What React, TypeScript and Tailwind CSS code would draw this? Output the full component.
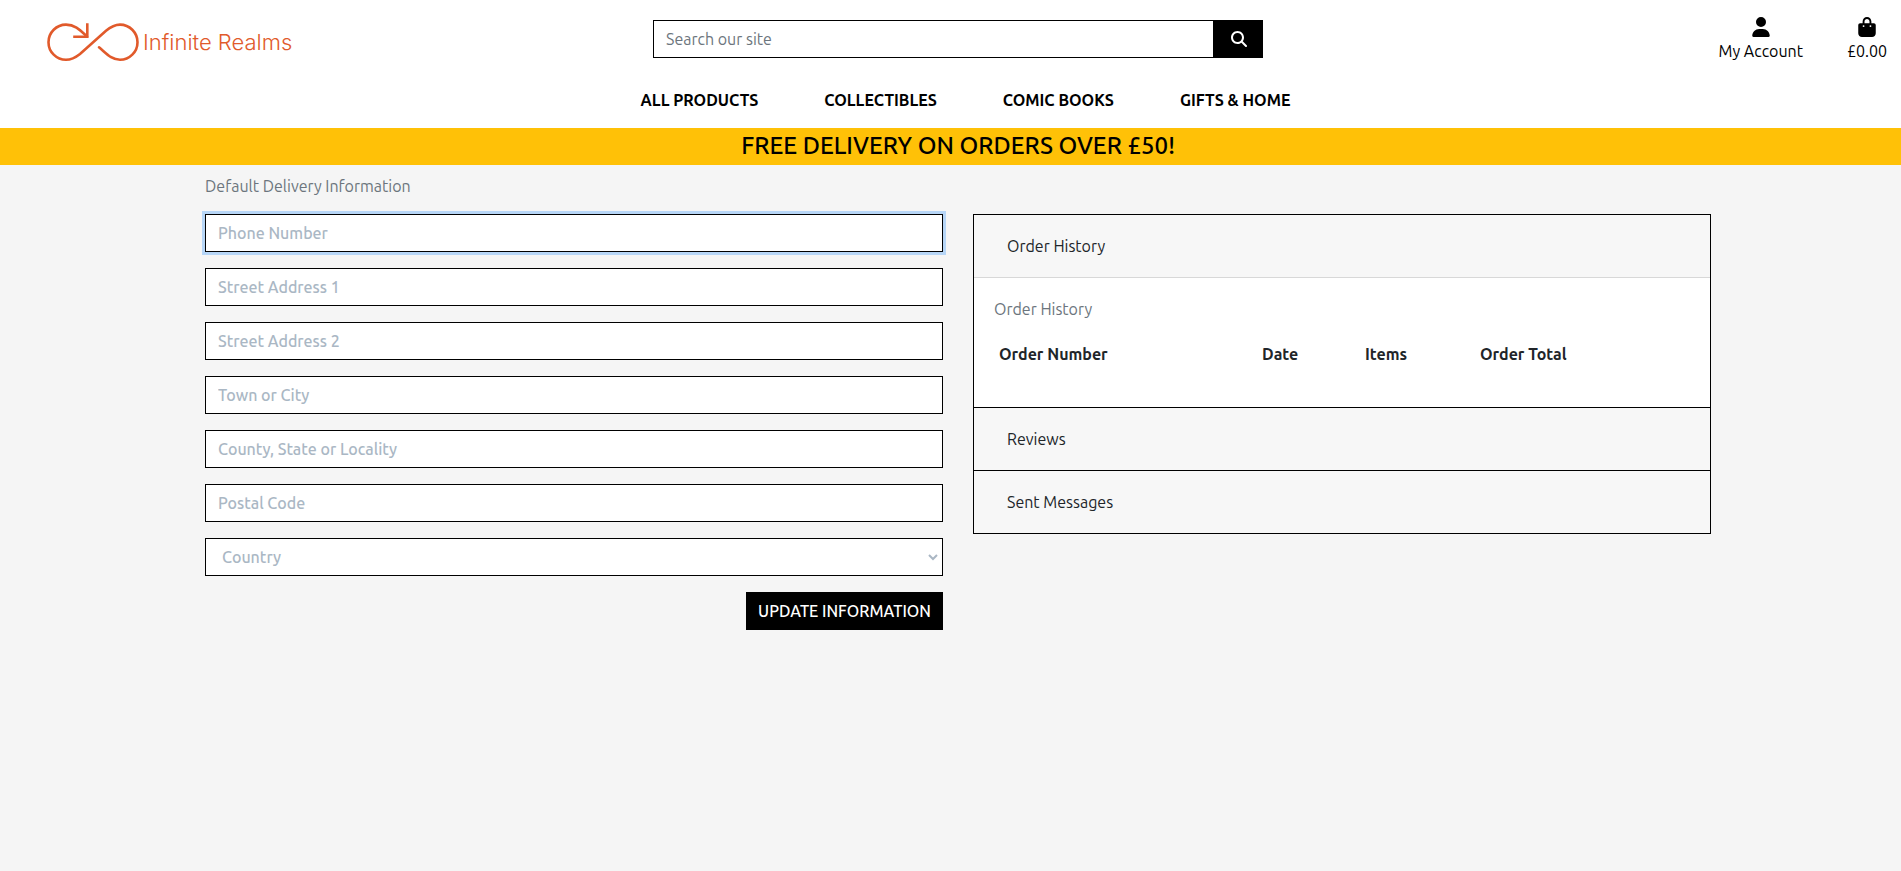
import { useState } from 'react';
import type { ReactNode } from 'react';
import { FaMagnifyingGlass, FaUser, FaBagShopping } from 'react-icons/fa6';

const navLinks = ['ALL PRODUCTS', 'COLLECTIBLES', 'COMIC BOOKS', 'GIFTS & HOME'];

const fields = [
  { id: 'phone', label: 'Phone Number' },
  { id: 'street1', label: 'Street Address 1' },
  { id: 'street2', label: 'Street Address 2' },
  { id: 'town', label: 'Town or City' },
  { id: 'county', label: 'County, State or Locality' },
  { id: 'postcode', label: 'Postal Code' },
];

function Logo() {
  return (
    <a href="#" className="flex items-center gap-1 text-[#e15a2b]">
      <svg width="92" height="40" viewBox="0 0 92 40" fill="none" stroke="currentColor" strokeWidth="2.6" strokeLinecap="round" aria-hidden="true">
        <path d="M40 13.500 C33 7 28 1.600 19 1.600 C9.500 1.600 1.500 9.500 1.500 19.200 C1.500 29 9.500 36.800 19 36.800 C25 36.800 28.500 34.600 33 31 L59 7.800 C63.500 4 67 1.600 73 1.600 C82.500 1.600 90.500 9.500 90.500 19.200 C90.500 29 82.500 36.800 73 36.800 C64.500 36.800 59.500 30.500 52 24.300" />
        <path d="M40.300 1.500 V13.800 H27.500" strokeLinecap="square" />
      </svg>
      <span className="pb-0.5 font-['Inter',sans-serif] text-[22px] leading-8 font-light">Infinite Realms</span>
    </a>
  );
}

function Header() {
  return (
    <header className="bg-white pl-[15px]">
      <div className="grid grid-cols-3 items-start gap-7 pt-[17px]">
        <div className="flex pt-1.5 pl-8">
          <Logo />
        </div>
        <form className="mt-[3px] flex items-center" onSubmit={(e) => e.preventDefault()}>
          <input
            type="search"
            aria-label="Search our site"
            placeholder="Search our site"
            className="h-[38px] min-w-0 flex-1 border border-black px-3 outline-none placeholder:text-[#6c757d]"
          />
          <button type="submit" aria-label="Search" className="flex h-[38px] w-[49px] items-center justify-center bg-black text-white">
            <FaMagnifyingGlass />
          </button>
        </form>
        <div className="flex justify-end gap-11 pr-3.5 text-black">
          <a href="#" className="flex flex-col items-center gap-0.5">
            <FaUser className="text-[20px]" />
            <span>My Account</span>
          </a>
          <a href="#" className="flex flex-col items-center gap-0.5">
            <FaBagShopping className="text-[20px]" />
            <span>£0.00</span>
          </a>
        </div>
      </div>
      <nav className="flex justify-center gap-[66px] pt-[25px] pb-4 pl-[15px] font-bold text-black">
        {navLinks.map((link) => (
          <a key={link} href="#">{link}</a>
        ))}
      </nav>
    </header>
  );
}

function DeliveryForm() {
  return (
    <form className="flex flex-col gap-4" onSubmit={(e) => e.preventDefault()}>
      {fields.map((field) => (
        <input
          key={field.id}
          id={field.id}
          aria-label={field.label}
          placeholder={field.label}
          autoFocus={field.id === 'phone'}
          className="h-[38px] border border-black bg-white px-3 font-medium caret-transparent outline-none placeholder:text-[#aab7c4] focus:shadow-[0_0_0_3px_rgba(0,123,255,0.25)]"
        />
      ))}
      <div className="relative">
        <select
          aria-label="Country"
          defaultValue=""
          className="h-[38px] w-full appearance-none border border-black bg-white px-4 font-medium text-[#aab7c4]"
        >
          <option value="">Country</option>
          <option value="GB">United Kingdom</option>
          <option value="IE">Ireland</option>
        </select>
        <svg className="pointer-events-none absolute top-4 right-[5px]" width="10" height="7" viewBox="0 0 10 7" fill="none" stroke="#aab7c4" strokeWidth="2" aria-hidden="true">
          <path d="M1 1 L5 5 L9 1" />
        </svg>
      </div>
      <button type="submit" className="h-[38px] self-end bg-black px-3 font-medium text-white">
        UPDATE INFORMATION
      </button>
    </form>
  );
}

function Section({ title, open, onToggle, children }: { title: string; open: boolean; onToggle: () => void; children: ReactNode }) {
  return (
    <section className="border-b border-black">
      <h2>
        <button type="button" aria-expanded={open} onClick={onToggle} className="h-[62px] w-full bg-[#f7f7f7] px-[33px] text-left">
          {title}
        </button>
      </h2>
      {open && <div className="border-t border-[#d8d8d8] bg-white px-5 pt-[19px] pb-5">{children}</div>}
    </section>
  );
}

function History() {
  const [open, setOpen] = useState('Order History');
  const toggle = (title: string) => setOpen(open === title ? '' : title);
  return (
    <div className="self-start border border-b-0 border-black">
      <Section title="Order History" open={open === 'Order History'} onToggle={() => toggle('Order History')}>
        <p className="text-[#6c757d]">Order History</p>
        <table className="mt-[17px] mb-[17px] w-full table-fixed text-left">
          <thead>
            <tr>
              <th className="w-[263px] px-[5px] py-1 font-bold">Order Number</th>
              <th className="w-[103px] px-[5px] py-1 font-bold">Date</th>
              <th className="w-[115px] px-[5px] py-1 font-bold">Items</th>
              <th className="px-[5px] py-1 font-bold">Order Total</th>
            </tr>
          </thead>
          <tbody />
        </table>
      </Section>
      <Section title="Reviews" open={open === 'Reviews'} onToggle={() => toggle('Reviews')}>
        <p className="text-[#6c757d]">Reviews</p>
      </Section>
      <Section title="Sent Messages" open={open === 'Sent Messages'} onToggle={() => toggle('Sent Messages')}>
        <p className="text-[#6c757d]">Sent Messages</p>
      </Section>
    </div>
  );
}

export default function App() {
  return (
    <div className="min-h-screen bg-[#f5f5f5] font-['Ubuntu','Noto_Sans',sans-serif] text-base text-[#212529]">
      <Header />
      <p className="bg-[#ffc107] pt-0.5 pb-[3px] pl-[15px] text-center text-2xl font-medium text-black">
        FREE DELIVERY ON ORDERS OVER £50!
      </p>
      <main className="pl-[15px]">
        <div className="mx-auto w-4/5 max-w-[1506px] pt-[9px]">
          <p className="mb-4 text-[#6c757d]">Default Delivery Information</p>
          <div className="grid grid-cols-2 gap-[30px]">
            <DeliveryForm />
            <History />
          </div>
        </div>
      </main>
    </div>
  );
}
